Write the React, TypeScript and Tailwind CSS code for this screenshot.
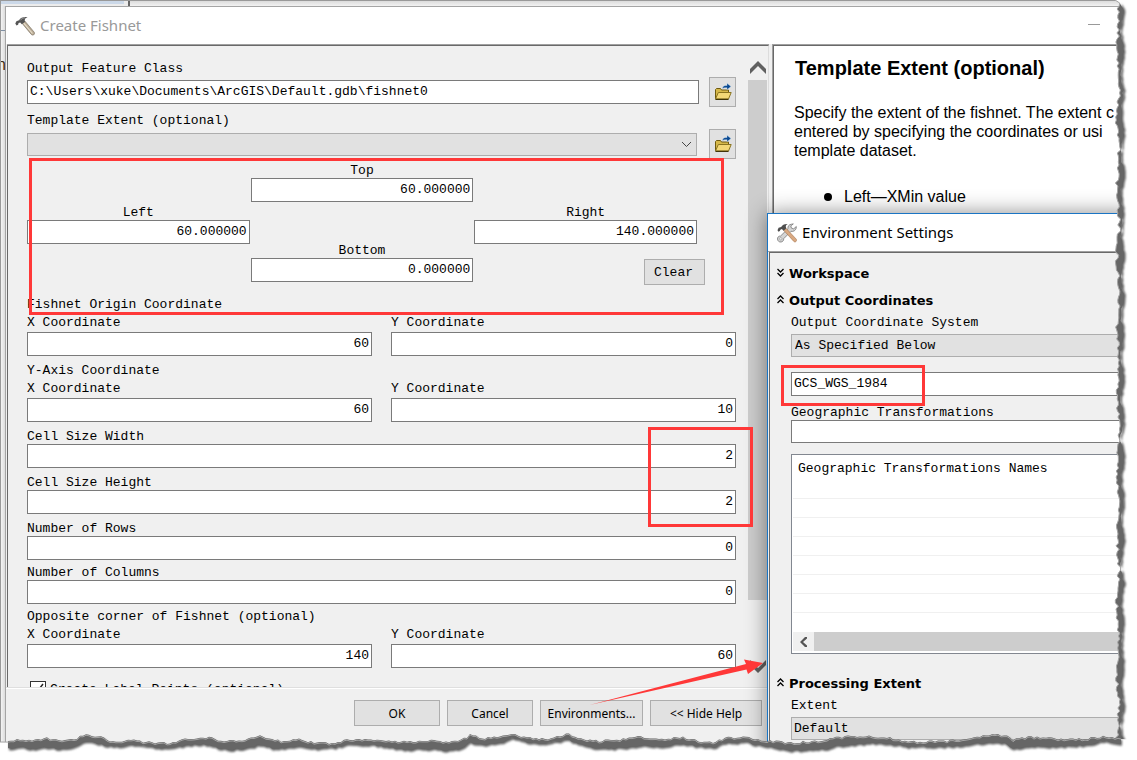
import React, { useId } from "react";

const MONO = "font-['Liberation_Mono','Noto_Sans_CJK_SC',monospace] text-[13px]";

/* ---------- icons ---------- */

function HammerIcon() {
  return (
    <svg className="h-5 w-5 shrink-0" viewBox="0 0 20 20" aria-hidden="true">
      <path d="M7 7.2 9.8 5l9.4 11.2c.6.9.3 2-.5 2.6-.8.5-1.800.3-2.400-.4z" fill="#b9ab94" stroke="#7d7364" strokeWidth=".7" />
      <path d="M8.800 7.200 17.500 17.500" stroke="#e8dfcd" strokeWidth="1.100" />
      <path d="M.3 7.600 1.400 5.200 4 4.300C5.600 1.800 8.500.6 12.600 1.200c-1.800.5-2.800 1.400-2.900 3.200l.4 1.300-3.300 2.500-1.600-1.700-1.600.6-.5 1.700-1.600.8z" fill="#555" />
      <path d="M5 4.500c1.300-1.700 3-2.500 5-2.700" stroke="#a5a5a5" strokeWidth=".8" fill="none" />
    </svg>
  );
}

function ToolsIcon() {
  return (
    <svg className="h-5 w-5 shrink-0" viewBox="0 0 20 20" aria-hidden="true">
      <path d="M14.500 1.200c-2.500.2-4 2.200-3.500 4.500L3.600 13c-1.900-.1-3.200 1.200-3.100 3 .1 1.900 1.700 3.300 3.600 3 1.700-.2 2.700-1.600 2.600-3.300l7.300-7.400c2.300.6 4.600-.8 5.200-3.100l.1-1.700-2.600 2.300-2.300-.7-.6-2.200 2.500-2z" fill="#d4d4d4" stroke="#777" strokeWidth=".8" />
      <circle cx="3.800" cy="15.800" r="1.200" fill="#fff" stroke="#888" strokeWidth=".6" />
      <path d="m6.700 7.300 2.300-2L19.300 16.200c.5.8.4 1.700-.3 2.300-.7.6-1.600.5-2.200-.1z" fill="#d9a982" stroke="#a5744e" strokeWidth=".6" />
      <path d="M.5 7.300 1.600 4.800l2.600-.9C5.500 1.800 7.500.7 10.800 1 9.300 1.700 8.700 2.500 8.800 4l.6 1.300-2.900 2.500-1.600-1.700-1.500.6-.6 1.300-1.300.7z" fill="#4e4e4e" />
    </svg>
  );
}

function FolderIcon() {
  return (
    <svg className="h-[18px] w-[18px]" viewBox="0 0 18 18" aria-hidden="true">
      <path d="M1.500 15.500V6.500l1-1h4l1 1.500h7v3" fill="#d6b84a" stroke="#6e5a10" />
      <path d="M1.500 16 4.300 9.500h12.900l-2.700 6.500z" fill="#f3d877" stroke="#8a7420" />
      <path d="M1.500 16.400h13" stroke="#3f3408" strokeWidth="1.200" />
      <path d="M8.500 5.500c.2-2.300 1.500-3 3.500-3h1V.2l4 3.300-4 3.200V4.800h-1.500c-1.300 0-2 .2-3 .7z" fill="#0b4a92" stroke="#cfe2f3" strokeWidth=".4" />
    </svg>
  );
}

function DoubleChevron({ open }: { open: boolean }) {
  return (
    <svg className="mb-[3px] h-[9px] w-[7px] shrink-0" viewBox="0 0 7 9" fill="none" stroke="#000" strokeWidth="1.300" aria-hidden="true">
      {open ? <path d="M.5 4 3.500 1l3 3M.5 8l3-3 3 3" /> : <path d="M.5 1l3 3 3-3M.5 5l3 3 3-3" />}
    </svg>
  );
}

/* ---------- form parts ---------- */

const LABEL = "h-4 leading-[18px]";
const INPUT = "h-6 w-full border border-[#7a7a7a] bg-white px-[2px] pb-[2px] text-right";

function Field({ label, value, center }: { label: string; value: string; center?: boolean }) {
  const id = useId();
  return (
    <div className="flex min-w-0 flex-col">
      <label htmlFor={id} className={center ? `${LABEL} text-center` : LABEL}>
        {label}
      </label>
      <input id={id} defaultValue={value} className={INPUT} />
    </div>
  );
}

function SpacedField({ label, value }: { label: string; value: string }) {
  const id = useId();
  return (
    <div className="flex min-w-0 flex-col gap-[2px]">
      <label htmlFor={id} className={LABEL}>{label}</label>
      <input id={id} defaultValue={value} className={INPUT} />
    </div>
  );
}

function CoordinatePair({ title, x, y }: { title: string; x: string; y: string }) {
  return (
    <fieldset className="flex flex-col">
      <legend className={LABEL}>{title}</legend>
      <div className="mt-[2px] grid grid-cols-2 gap-[19px]">
        <SpacedField label="X Coordinate" value={x} />
        <SpacedField label="Y Coordinate" value={y} />
      </div>
    </fieldset>
  );
}

function BrowseButton({ label }: { label: string }) {
  return (
    <button type="button" aria-label={label} className="flex h-[30px] w-[27px] shrink-0 items-center justify-center border border-[#adadad] bg-[#e1e1e1]">
      <FolderIcon />
    </button>
  );
}

function FishnetForm() {
  return (
    <div className={`${MONO} min-w-0 flex-1 pt-[14px] pr-3 pl-[19px] text-black`}>
      <label htmlFor="output" className={`block ${LABEL}`}>Output Feature Class</label>
      <div className="mt-px flex items-center gap-[10px]">
        <input id="output" defaultValue={"C:\\Users\\xuke\\Documents\\ArcGIS\\Default.gdb\\fishnet0"} className="h-6 min-w-0 flex-1 border border-[#7a7a7a] bg-white px-[2px] pb-[2px]" />
        <BrowseButton label="Browse output feature class" />
      </div>
      <label htmlFor="template" className={`mt-[5px] block ${LABEL}`}>Template Extent (optional)</label>
      <div className="mt-px flex items-center gap-3">
        <div className="relative min-w-0 flex-1">
          <select id="template" className="block h-[23px] w-full appearance-none border border-[#adadad] bg-[#e1e1e1]">
            <option></option>
          </select>
          <svg className="pointer-events-none absolute top-[8px] right-[5px] h-[7px] w-[11px]" viewBox="0 0 11 7" fill="none" stroke="#444" aria-hidden="true">
            <path d="m1 1 4.500 4.500L10 1" />
          </svg>
        </div>
        <BrowseButton label="Browse template extent" />
      </div>

      <div className="relative mt-[3px] pr-[39px] pb-[14px]">
        <div className="grid grid-cols-3 gap-px">
          <div className="pt-[42px]">
            <Field label="Left" value="60.000000" center />
          </div>
          <div className="flex flex-col gap-10">
            <Field label="Top" value="60.000000" center />
            <Field label="Bottom" value="0.000000" center />
          </div>
          <div className="flex h-[120px] flex-col pt-[42px]">
            <Field label="Right" value="140.000000" center />
            <button type="button" className="mt-[15px] -mr-2 h-[26px] w-[61px] shrink-0 self-end border border-[#adadad] bg-[#e1e1e1] pt-[2px] pr-[2px]">
              Clear
            </button>
          </div>
        </div>
        <div className="pointer-events-none absolute -top-1 right-[12px] -bottom-[19px] left-[2px] border-[3px] border-[#ff3838]" />
      </div>

      <div className="flex flex-col gap-[6px]">
        <CoordinatePair title="Fishnet Origin Coordinate" x="60" y="0" />
        <CoordinatePair title="Y-Axis Coordinate" x="60" y="10" />
        <div className="relative flex flex-col gap-[6px]">
          <Field label="Cell Size Width" value="2" />
          <Field label="Cell Size Height" value="2" />
          <div className="pointer-events-none absolute -top-px -right-[17px] -bottom-[13px] z-10 w-[105px] border-[3px] border-[#ff3838]" />
        </div>
        <Field label="Number of Rows" value="0" />
      </div>
      <div className="mt-1 flex flex-col gap-1">
        <Field label="Number of Columns" value="0" />
        <CoordinatePair title="Opposite corner of Fishnet (optional)" x="140" y="60" />
      </div>
      <label className="mt-[13px] flex gap-1 pl-[3px]">
        <input type="checkbox" defaultChecked className="peer sr-only" />
        <span className="flex h-4 w-4 items-center justify-center border border-[#333] bg-white">
          <svg className="h-3 w-3" viewBox="0 0 12 12" fill="none" stroke="#222" strokeWidth="1.500" aria-hidden="true">
            <path d="m1 6 3.500 3.500L11 1" />
          </svg>
        </span>
        <span className="leading-[18px]">Create Label Points (optional)</span>
      </label>
    </div>
  );
}

function VerticalScrollbar() {
  return (
    <div className="flex w-[19px] shrink-0 flex-col items-center" aria-hidden="true">
      <div className="flex h-[34px] w-full items-end justify-center pb-[6px]">
        <svg className="h-[13px] w-4" viewBox="0 0 16 13">
          <path d="M0 8 8 0l8 8v5L8 5 0 13z" fill="#606060" />
        </svg>
      </div>
      <div className="h-[520px] w-full bg-[#cdcdcd]" />
      <svg className="mt-[60px] h-[13px] w-4" viewBox="0 0 16 13">
        <path d="M0 5 8 13l8-8V0L8 8 0 0z" fill="#606060" />
      </svg>
    </div>
  );
}

function FooterButton({ children, width }: { children: React.ReactNode; width: string }) {
  return (
    <button type="button" className={`${width} h-[26px] border border-[#adadad] bg-[#e1e1e1] pt-px font-['Noto_Sans',sans-serif] text-[12px] whitespace-nowrap text-black`}>
      {children}
    </button>
  );
}

function HelpPane() {
  return (
    <div className="w-[365px] shrink-0 border-t border-l border-[#a0a0a0]">
      <div className="h-full overflow-hidden border-t border-l border-[#696969] bg-white pl-5 font-['Liberation_Sans',Arial,sans-serif] text-[16px] leading-[19px] whitespace-nowrap text-black">
        <h2 className="mt-[10px] pl-px text-[20px] leading-6 font-bold">Template Extent (optional)</h2>
        <p className="mt-[23px]">
          Specify the extent of the fishnet. The extent c
          <br />
          entered by specifying the coordinates or usi
          <br />
          template dataset.
        </p>
        <ul className="mt-[27px] pl-[30px]">
          <li className="flex items-center gap-3">
            <span className="h-2 w-2 rounded-full bg-black" />
            Left—XMin value
          </li>
        </ul>
      </div>
    </div>
  );
}

/* ---------- environment window ---------- */

function SectionHeader({ title, open }: { title: string; open: boolean }) {
  return (
    <button type="button" aria-expanded={open} className="flex h-[27px] items-center gap-[5px] pl-[7px] font-['DejaVu_Sans',Verdana,sans-serif] text-[13px] font-bold">
      <DoubleChevron open={open} />
      {title}
    </button>
  );
}

function EnvironmentWindow() {
  return (
    <section className="absolute top-[213px] right-0 bottom-0 flex w-[370px] flex-col border-t border-l border-[#1a75c4] bg-[#f0f0f0] shadow-[0_0_20px_rgba(0,0,0,0.45)]">
      <header className="flex h-[37px] shrink-0 items-center gap-[5px] bg-white pl-[9px] font-['Noto_Sans',sans-serif] text-[15px] text-black">
        <ToolsIcon />
        <h2>Environment Settings</h2>
      </header>
      <div className="flex flex-1 flex-col border-t border-[#a0a0a0] pl-px">
        <div className={`${MONO} flex flex-1 flex-col border-t border-l border-[#696969] pt-[7px] text-black`}>
          <SectionHeader title="Workspace" open={false} />
          <SectionHeader title="Output Coordinates" open />
          <div className="flex flex-col pl-[21px]">
            <label htmlFor="ocs" className={LABEL}>Output Coordinate System</label>
            <select id="ocs" className="mt-1 h-[23px] appearance-none border border-[#adadad] bg-[#e1e1e1] px-[3px] pt-px">
              <option>As Specified Below</option>
            </select>
            <div className="relative mt-[15px] flex flex-col">
              <input aria-label="Coordinate system" defaultValue="GCS_WGS_1984" className="h-6 border border-[#7a7a7a] bg-white px-[2px] pb-[2px]" />
              <div className="pointer-events-none absolute -top-[7px] -left-[10px] h-[41px] w-[144px] border-[3px] border-[#ff3838]" />
            </div>
            <label htmlFor="geo" className={`mt-2 ${LABEL}`}>Geographic Transformations</label>
            <input id="geo" className="h-[23px] border border-[#7a7a7a] bg-white px-[2px]" />
            <div className="mt-[11px] flex flex-col border border-[#828790] bg-white p-px pb-[2px]">
              <table className="w-full border-collapse text-left">
                <thead>
                  <tr className="h-[23px]">
                    <th className="pt-[2px] pb-0 pl-[5px] font-normal">Geographic Transformations Names</th>
                  </tr>
                </thead>
                <tbody>
                  {Array.from({ length: 7 }, (_, i) => (
                    <tr key={i} className="h-[19px] border-b border-[#f0f0f0]">
                      <td className="p-0" />
                    </tr>
                  ))}
                  <tr className="h-5">
                    <td className="p-0" />
                  </tr>
                </tbody>
              </table>
              <div className="flex h-[19px] bg-[#cdcdcd]">
                <button type="button" aria-label="Scroll left" className="flex w-[21px] items-center justify-center bg-[#f0f0f0]">
                  <svg className="h-[10px] w-[7px]" viewBox="0 0 7 10" aria-hidden="true">
                    <path d="M5 0h2v1.500L3 5l4 3.500V10H5L0 5z" fill="#555" />
                  </svg>
                </button>
              </div>
            </div>
          </div>
          <div className="mt-4 flex flex-col">
            <SectionHeader title="Processing Extent" open />
            <div className="flex flex-col pl-[21px]">
              <label htmlFor="extent" className={LABEL}>Extent</label>
              <select id="extent" className="mt-1 h-[23px] appearance-none border border-[#adadad] bg-[#e1e1e1] px-[2px] pt-px">
                <option>Default</option>
              </select>
            </div>
          </div>
        </div>
      </div>
    </section>
  );
}

/* ---------- torn paper edges ---------- */

function noise(i: number, seed: number) {
  const v = Math.sin(i * 12.9898 + seed * 78.233) * 43758.5453;
  return v - Math.floor(v);
}

function interpolate(profile: number[][], t: number) {
  for (let i = 1; i < profile.length; i++) {
    const [a, va] = profile[i - 1];
    const [b, vb] = profile[i];
    if (t <= b) return va + ((vb - va) * (t - a)) / (b - a);
  }
  return profile[profile.length - 1][1];
}

const BOTTOM = [
  [8, 12], [20, 10], [32, 12], [45, 9], [58, 11], [75, 10], [86, 5], [100, 8], [112, 12], [135, 11], [145, 13], [170, 14],
  [185, 10], [205, 8], [225, 12], [245, 11], [260, 7], [272, 11], [285, 12], [300, 10], [315, 14], [335, 14], [345, 11],
  [375, 10], [400, 13], [430, 11], [450, 13], [460, 12], [470, 6], [485, 9], [500, 8], [511, 4], [525, 8], [545, 10],
  [568, 5], [580, 9], [595, 12], [615, 11], [640, 8], [665, 10], [680, 8], [700, 12], [715, 13], [725, 9], [745, 8],
  [760, 11], [790, 14], [825, 11], [835, 8], [870, 7], [890, 9], [910, 13], [945, 12], [965, 10], [992, 5], [1005, 6],
  [1012, 11], [1030, 8], [1060, 10], [1085, 10], [1105, 7], [1121, 10],
];

function bottomPaths() {
  const inner: string[] = [];
  const outer: string[] = [];
  for (let x = 8; x <= 1123; x += 3) {
    const y = interpolate(BOTTOM, x);
    inner.push(`${x} ${(y + noise(x, 1) * 2.400 - 1.200).toFixed(1)}`);
    outer.unshift(`${x} ${(y + 5.500 + 2 * Math.sin(x / 31) + noise(x, 2) * 2).toFixed(1)}`);
  }
  return { cover: `M0 12L${inner.join("L")}L1137 10V30H0z`, band: `M${inner.join("L")}L${outer.join("L")}z`, line: `M0 12L${inner.join("L")}` };
}

function rightPaths() {
  const inner: string[] = [];
  const outer: string[] = [];
  for (let y = 3; y <= 744; y += 3) {
    const x = 8 + Math.sin(y / 11) + noise(y, 3) * 3.600 - 1.800;
    inner.push(`${x.toFixed(1)} ${y}`);
    if (y > 8) outer.unshift(`${(12 + 1.200 * Math.sin(y / 6.500) + noise(y, 4) * 1.600 - 0.8).toFixed(1)} ${y}`);
  }
  return { cover: `M5 0L${inner.join("L")}L8 760H27V0z`, band: `M${inner.join("L")}L${outer.join("L")}z`, line: `M5 0L${inner.join("L")}` };
}

function TornEdges() {
  const b = bottomPaths();
  const r = rightPaths();
  return (
    <>
      <svg className="pointer-events-none absolute top-0 right-0 z-20 h-full w-[27px]" viewBox="0 0 27 760" preserveAspectRatio="none" aria-hidden="true">
        <filter id="edge-blur" x="-50%" y="-5%" width="200%" height="110%">
          <feGaussianBlur stdDeviation="1.300" />
        </filter>
        <path d={r.cover} fill="#fff" />
        <path d={r.band} fill="#606060" filter="url(#edge-blur)" transform="translate(2 1)" />
        <path d={r.band} fill="#666" />
        <path d={r.line} fill="none" stroke="#a5a5a5" />
      </svg>
      <svg className="pointer-events-none absolute bottom-0 left-0 z-20 h-[30px] w-full" viewBox="0 0 1137 30" preserveAspectRatio="none" aria-hidden="true">
        <filter id="bottom-blur" x="-1%" y="-50%" width="102%" height="200%">
          <feGaussianBlur stdDeviation="1.300" />
        </filter>
        <path d={b.cover} fill="#fff" />
        <path d={b.band} fill="#606060" filter="url(#bottom-blur)" transform="translate(1 1)" />
        <path d={b.band} fill="#666" transform="translate(0 -1)" />
        <path d={b.line} fill="none" stroke="#a5a5a5" />
      </svg>
    </>
  );
}

export default function App() {
  return (
    <div className="relative flex h-screen flex-col overflow-hidden bg-[#ececec]">
      <div className="flex h-[6px] shrink-0 border-t border-l border-[#999]">
        <div className="w-[123px] border-b-2 border-[#ececec] bg-[#cbd8e8]" />
        <div className="w-[6px] border-r-2 border-[#666]" />
        <div className="flex-1 bg-gradient-to-b from-[#dcdcdc] to-[#f2f2f2]" />
      </div>
      <div className="flex min-h-0 flex-1">
        <div className="w-[5px] shrink-0 overflow-hidden border-l border-[#999] bg-gradient-to-r from-[#f4f4f4] to-[#dcdcdc]">
          <div className="h-[25px] border-b border-[#7f8fa3]" />
          <span className="mt-[26px] -ml-[4px] block font-['Liberation_Sans',sans-serif] text-[16px] leading-4 text-[#3c2a10]">n</span>
        </div>
        <main className="flex min-w-0 flex-1 flex-col border-t border-l border-[#a5a5a5] bg-[#f0f0f0]">
          <header className="flex h-[37px] shrink-0 items-center bg-white pr-[37px] pl-[9px]">
            <HammerIcon />
            <h1 className="ml-[5px] flex-1 font-['Noto_Sans',sans-serif] text-[15px] text-[#999]">Create Fishnet</h1>
            <button type="button" aria-label="Minimize" className="flex h-6 w-3 items-center">
              <span className="mb-[2px] h-px w-3 bg-[#999]" />
            </button>
          </header>
          <div className="flex min-h-0 flex-1 gap-[3px]">
            <div className="flex min-w-0 flex-1 flex-col">
              <div className="ml-px flex min-h-0 flex-1 overflow-hidden border-t border-[#a0a0a0]">
                <div className="flex min-w-0 flex-1 border-t border-r border-l border-t-[#696969] border-r-[#dcdcdc] border-l-[#696969]">
                  <FishnetForm />
                  <VerticalScrollbar />
                  <div className="w-px shrink-0" />
                </div>
              </div>
              <footer className="relative flex h-[73px] shrink-0 justify-end gap-[7px] border-t border-[#dfdfdf] pt-3 pr-[7px] shadow-[inset_0_1px_0_#fff]">
                <FooterButton width="w-[86px]">OK</FooterButton>
                <FooterButton width="w-[86px]">Cancel</FooterButton>
                <FooterButton width="w-[103px]">Environments...</FooterButton>
                <FooterButton width="w-[112px]">&lt;&lt; Hide Help</FooterButton>
                <svg className="pointer-events-none absolute -top-[30px] right-[4px] z-10 h-12 w-[176px]" viewBox="0 0 176 48" aria-hidden="true">
                  <path d="M.5 47 157 6 155 1.500 174 5 159 16 157.500 11.500z" fill="#ff3838" />
                </svg>
              </footer>
            </div>
            <HelpPane />
          </div>
        </main>
      </div>
      <EnvironmentWindow />
      <TornEdges />
    </div>
  );
}
